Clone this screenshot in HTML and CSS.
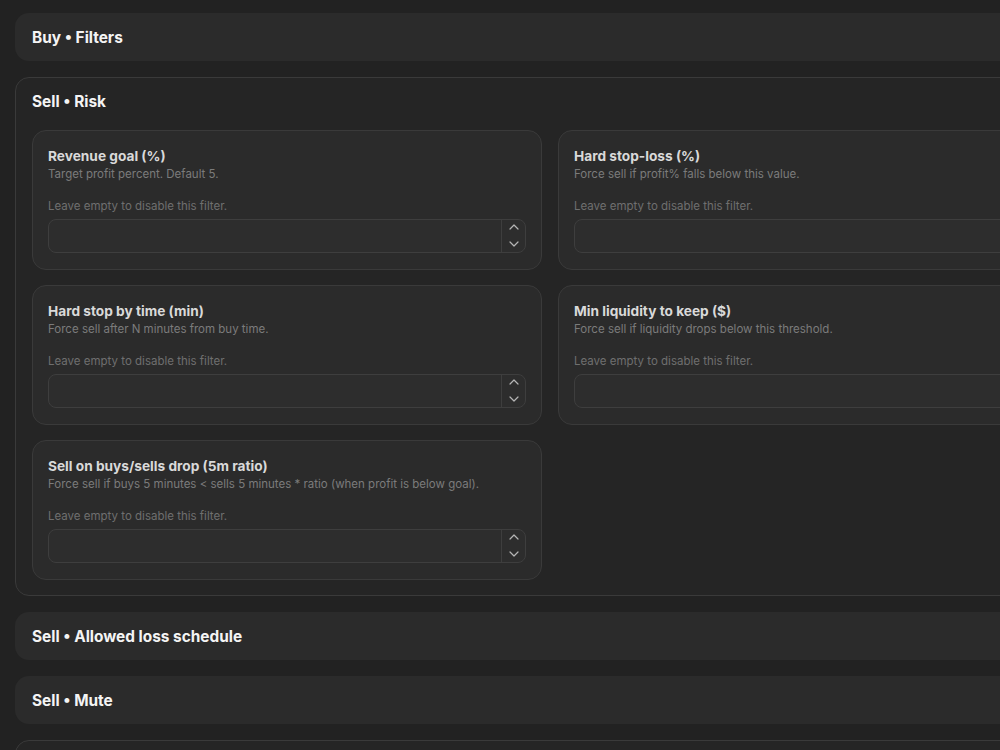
FILE: index.html
```html
<!DOCTYPE html>
<html lang="en">
<head>
    <meta charset="UTF-8">
    <meta name="viewport" content="width=device-width, initial-scale=1.0">
    <title>Bot Settings</title>
    <link rel="stylesheet" href="styles.css">
</head>
<body>

<div class="settings">

    <section class="panel">
        <div class="panel-header">Buy • Filters</div>
    </section>

    <section class="panel open">
        <div class="panel-header">Sell • Risk</div>
        <div class="panel-body">

            <div class="field-card">
                <div class="field-title">Revenue goal (%)</div>
                <div class="field-desc">Target profit percent. Default 5.</div>
                <div class="field-hint">Leave empty to disable this filter.</div>
                <div class="number-input">
                    <input type="text" aria-label="Revenue goal">
                    <div class="spinner">
                        <svg viewBox="0 0 10 6"><path d="M1 5 L5 1 L9 5"/></svg>
                        <svg viewBox="0 0 10 6"><path d="M1 1 L5 5 L9 1"/></svg>
                    </div>
                </div>
            </div>

            <div class="field-card">
                <div class="field-title">Hard stop-loss (%)</div>
                <div class="field-desc">Force sell if profit% falls below this value.</div>
                <div class="field-hint">Leave empty to disable this filter.</div>
                <div class="number-input">
                    <input type="text" aria-label="Hard stop-loss">
                    <div class="spinner">
                        <svg viewBox="0 0 10 6"><path d="M1 5 L5 1 L9 5"/></svg>
                        <svg viewBox="0 0 10 6"><path d="M1 1 L5 5 L9 1"/></svg>
                    </div>
                </div>
            </div>

            <div class="field-card">
                <div class="field-title">Hard stop by time (min)</div>
                <div class="field-desc">Force sell after N minutes from buy time.</div>
                <div class="field-hint">Leave empty to disable this filter.</div>
                <div class="number-input">
                    <input type="text" aria-label="Hard stop by time">
                    <div class="spinner">
                        <svg viewBox="0 0 10 6"><path d="M1 5 L5 1 L9 5"/></svg>
                        <svg viewBox="0 0 10 6"><path d="M1 1 L5 5 L9 1"/></svg>
                    </div>
                </div>
            </div>

            <div class="field-card">
                <div class="field-title">Min liquidity to keep ($)</div>
                <div class="field-desc">Force sell if liquidity drops below this threshold.</div>
                <div class="field-hint">Leave empty to disable this filter.</div>
                <div class="number-input">
                    <input type="text" aria-label="Min liquidity">
                    <div class="spinner">
                        <svg viewBox="0 0 10 6"><path d="M1 5 L5 1 L9 5"/></svg>
                        <svg viewBox="0 0 10 6"><path d="M1 1 L5 5 L9 1"/></svg>
                    </div>
                </div>
            </div>

            <div class="field-card">
                <div class="field-title">Sell on buys/sells drop (5m ratio)</div>
                <div class="field-desc">Force sell if buys 5 minutes &lt; sells 5 minutes * ratio (when profit is below goal).</div>
                <div class="field-hint">Leave empty to disable this filter.</div>
                <div class="number-input">
                    <input type="text" aria-label="Buys/sells ratio">
                    <div class="spinner">
                        <svg viewBox="0 0 10 6"><path d="M1 5 L5 1 L9 5"/></svg>
                        <svg viewBox="0 0 10 6"><path d="M1 1 L5 5 L9 1"/></svg>
                    </div>
                </div>
            </div>

        </div>
    </section>

    <section class="panel">
        <div class="panel-header">Sell • Allowed loss schedule</div>
    </section>

    <section class="panel">
        <div class="panel-header">Sell • Mute</div>
    </section>

    <!-- next section starts at the bottom edge -->
    <section class="panel open">
        <div class="panel-header"></div>
    </section>

</div>

</body>
</html>
```

FILE: styles.css
```css
body {
    font-family: Inter, "Noto Sans", sans-serif;
    margin: 0;
    padding: 13px 0 0 15px;
    background: #222222;
    color: #f2f2f2;
    overflow: hidden;
    height: 750px;
    box-sizing: border-box;
}

.settings {
    width: 1070px;
    display: flex;
    flex-direction: column;
    gap: 16px;
}

.panel {
    background: #2b2b2b;
    border-radius: 14px;
}

.panel.open {
    background: #252525;
    border: 1px solid #3a3a3a;
}

.panel-header {
    height: 48px;
    display: flex;
    align-items: center;
    padding: 0 17px;
    font-size: 15.4px;
    font-weight: 700;
    color: #f4f4f4;
}

.panel.open .panel-header {
    height: 47px;
    padding: 0 16px;
}

.panel-body {
    display: grid;
    grid-template-columns: 510px 510px;
    column-gap: 16px;
    row-gap: 15px;
    align-items: start;
    padding: 5px 16px 15px;
}

.field-card {
    background: #2b2b2b;
    border: 1px solid #3a3a3a;
    border-radius: 14px;
    padding: 17px 15px 16px;
}

.field-title {
    font-size: 13.7px;
    line-height: 16px;
    font-weight: 700;
    color: #d9d9d9;
}

.field-desc {
    margin-top: 3px;
    font-size: 11.5px;
    line-height: 14px;
    color: #7b7b7b;
}

.field-hint {
    margin-top: 18px;
    font-size: 11.5px;
    line-height: 14px;
    color: #6f6f6f;
}

.number-input {
    margin-top: 6px;
    height: 34px;
    box-sizing: border-box;
    display: flex;
    background: #2d2d2d;
    border: 1px solid #3e3e3e;
    border-radius: 8px;
    overflow: hidden;
}

.number-input input {
    flex: 1;
    min-width: 0;
    background: transparent;
    border: none;
    outline: none;
    color: #e0e0e0;
    font-family: inherit;
    font-size: 13px;
    padding: 0 10px;
}

.spinner {
    width: 23px;
    border-left: 1px solid #3e3e3e;
    display: flex;
    flex-direction: column;
    justify-content: space-between;
    align-items: center;
    padding: 4px 0 5px;
}

.spinner svg {
    width: 10px;
    height: 6px;
    fill: none;
    stroke: #b5b5b5;
    stroke-width: 1.2;
    stroke-linecap: round;
    stroke-linejoin: round;
}
```
